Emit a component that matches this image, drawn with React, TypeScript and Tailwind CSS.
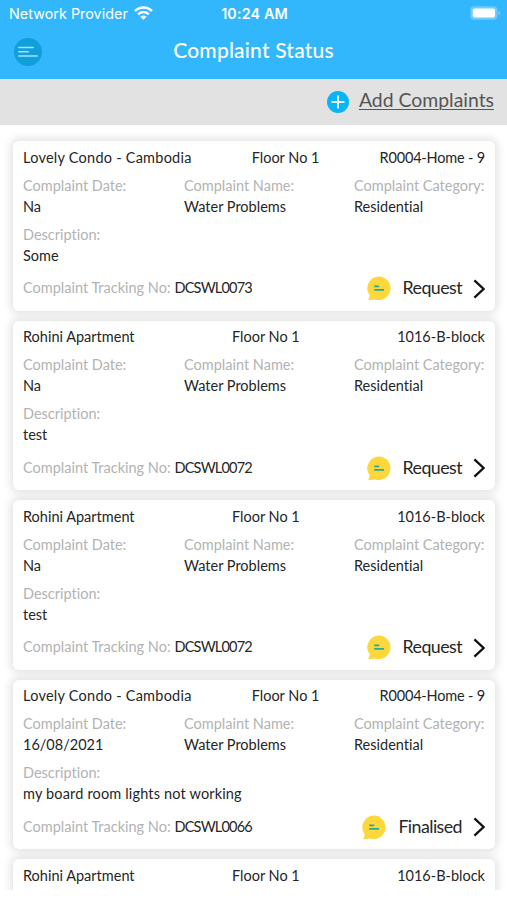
import React from 'react';

interface Complaint {
    place: string;
    floor: string;
    unit: string;
    date: string;
    name: string;
    category: string;
    description: string;
    trackingNo: string;
    status: string;
}

const rohini: Complaint = {
    place: 'Rohini Apartment', floor: 'Floor No 1', unit: '1016-B-block',
    date: 'Na', name: 'Water Problems', category: 'Residential',
    description: 'test', trackingNo: 'DCSWL0072', status: 'Request',
};

const lovely: Complaint = {
    place: 'Lovely Condo - Cambodia', floor: 'Floor No 1', unit: 'R0004-Home - 9',
    date: 'Na', name: 'Water Problems', category: 'Residential',
    description: 'Some', trackingNo: 'DCSWL0073', status: 'Request',
};

const complaints: Complaint[] = [
    lovely,
    rohini,
    rohini,
    { ...lovely, date: '16/08/2021', description: 'my board room lights not working', trackingNo: 'DCSWL0066', status: 'Finalised' },
];

function StatusBar() {
    return (
        <div className="grid h-7 grid-cols-3 items-center pl-[9px] pr-[7px] font-['Inter',sans-serif] leading-7">
            <div className="flex items-center gap-1.5 whitespace-nowrap">
                <span className="text-[14.3px] tracking-[0.05px]">Network Provider</span>
                <svg width="19" height="14" viewBox="0 0 19 14" fill="none" stroke="white" strokeWidth="2.5" className="mb-0.5 shrink-0">
                    <path d="M1 5.2C5.8.4 13.2.4 18 5.2" />
                    <path d="M4.1 8.4c3.1-3.1 7.7-3.1 10.8 0" />
                    <path d="M9.5 13.8 6.4 10.7c1.8-1.7 4.4-1.7 6.2 0Z" fill="white" stroke="none" />
                </svg>
            </div>
            <span className="text-center text-[14.3px] font-semibold tracking-[0.15px]">10:24 AM</span>
            <svg width="30" height="14" viewBox="0 0 30 14" className="mb-0.5 justify-self-end">
                <rect x="0.4" y="0.2" width="27" height="13.6" rx="4" fill="white" fillOpacity="0.3" />
                <rect x="2.8" y="2.5" width="22.2" height="9" rx="2" fill="white" />
                <path d="M28.6 5c1.5.6 1.5 3.4 0 4Z" fill="white" fillOpacity="0.5" />
            </svg>
        </div>
    );
}

function ChatIcon() {
    return (
        <svg width="24" height="25" viewBox="0 0 24 25" className="shrink-0">
            <path d="M12 .5A11.8 11.8 0 1 1 8 23.5L1.2 24.2 2.8 19.5A11.8 11.8 0 0 1 12 .5Z" fill="#fdd73b" />
            <path d="M7.2 10.4h5M7.2 13.8h9.8" stroke="#27ac8e" strokeWidth="1.7" />
        </svg>
    );
}

function Field({ label, value }: { label: string; value: string }) {
    return (
        <div className="leading-5">
            <div className="text-[#b3b3b3]">{label}</div>
            <div className={value.length > 20 ? 'pt-px tracking-[0.16px]' : 'pt-px'}>{value}</div>
        </div>
    );
}

function CardHeader({ item }: { item: Complaint }) {
    return (
        <div className="flex justify-between leading-5">
            <span className={item === rohini ? '' : 'tracking-[0.24px]'}>{item.place}</span>
            <span>{item.floor}</span>
            <span className={item === rohini ? '' : 'tracking-[-0.18px]'}>{item.unit}</span>
        </div>
    );
}

function ComplaintCard({ item }: { item: Complaint }) {
    return (
        <div className="h-[169.6px] shrink-0 rounded-md bg-white px-2.5 pt-[6.6px] shadow-[0_0_10px_2px_rgba(0,0,0,0.13)]">
            <CardHeader item={item} />
            <div className="mt-2 grid grid-cols-[161px_170px_1fr] whitespace-nowrap">
                <Field label="Complaint Date:" value={item.date} />
                <Field label="Complaint Name:" value={item.name} />
                <Field label="Complaint Category:" value={item.category} />
            </div>
            <div className="mt-2">
                <Field label="Description:" value={item.description} />
            </div>
            <div className="mt-[9px] flex h-7 items-center justify-between">
                <div className="flex w-[230px] gap-1 pb-px whitespace-nowrap">
                    <span className="w-[147.5px] text-[#b3b3b3]">Complaint Tracking No:</span>
                    <span className="tracking-[-0.8px]">{item.trackingNo}</span>
                </div>
                <div className="flex items-center">
                    <ChatIcon />
                    <span className="ml-3 pb-0.5 text-[17.8px] tracking-[-0.55px]">{item.status}</span>
                    <svg width="12" height="20" viewBox="0 0 12 20" fill="none" stroke="#111" strokeWidth="2.3" className="ml-[11px]">
                        <path d="M1.4 1.3 10.6 10 1.4 18.7" />
                    </svg>
                </div>
            </div>
        </div>
    );
}

export default function App() {
    return (
        <div className="flex h-[900px] w-[507px] flex-col overflow-hidden bg-white font-['Lato',sans-serif]">
            <header className="h-[79px] shrink-0 bg-[#32b7fd] text-white">
                <StatusBar />
                <div className="grid h-[47px] grid-cols-[28px_1fr_28px] items-center px-3.5">
                    <button className="flex size-7 items-center justify-center rounded-full bg-[#119fdb]" aria-label="Menu">
                        <svg width="20" height="12" viewBox="0 0 20 12" stroke="#a5e3fb" strokeWidth="1.5" strokeLinecap="round">
                            <path d="M.8 1.5h14.4M.8 5.8h9.4M.8 10.1h18.4" />
                        </svg>
                    </button>
                    <h1 className="pb-1 text-center text-[21px] font-medium tracking-[0.2px]">Complaint Status</h1>
                </div>
            </header>
            <div className="flex h-[46px] shrink-0 items-center justify-end gap-2.5 bg-[#e2e2e2] pr-[13px]">
                <svg width="22" height="22" viewBox="0 0 22 22">
                    <circle cx="11" cy="11" r="11" fill="#08b5f9" />
                    <path d="M11 4.5v13M4.5 11h13" stroke="#e2f4fa" strokeWidth="2" />
                </svg>
                <a className="pb-1 text-[19.4px] text-[#555] underline decoration-1 underline-offset-2">Add Complaints</a>
            </div>
            <main className="flex h-[765px] shrink-0 flex-col gap-2.5 overflow-hidden pl-[13px] pr-3 pt-4 text-[14.5px] text-[#262626] [font-variant-ligatures:none]">
                {complaints.map((item, i) => (
                    <ComplaintCard key={i} item={item} />
                ))}
                <div className="h-9 shrink-0 rounded-t-md bg-white px-2.5 pt-[6.6px] shadow-[0_0_10px_2px_rgba(0,0,0,0.13)]">
                    <CardHeader item={rohini} />
                </div>
            </main>
        </div>
    );
}
